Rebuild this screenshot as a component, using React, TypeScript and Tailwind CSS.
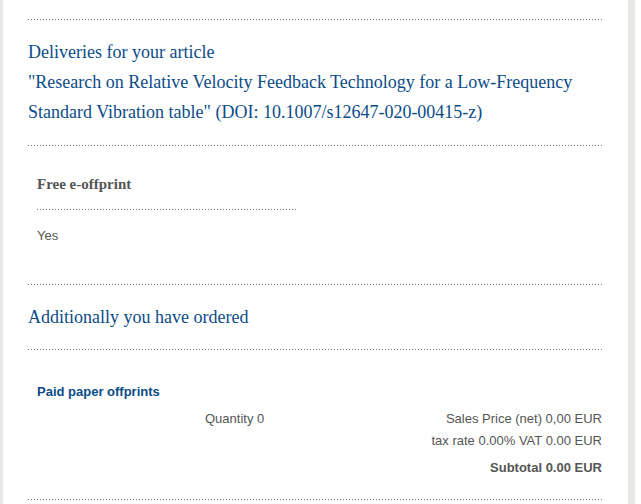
const serif = "font-['Liberation_Serif','Times_New_Roman',serif]";
const sans = "font-['Liberation_Sans',Arial,sans-serif]";

const Dotted = ({ className = "" }: { className?: string }) => (
  <div
    className={`h-px bg-[linear-gradient(to_right,#7a7a7a_1px,transparent_1px)] bg-[length:3px_1px] bg-repeat-x ${className}`}
  />
);

export default function App() {
  return (
    <div className="flex h-[504px] w-full overflow-hidden bg-white">
      <div className="w-[3px] shrink-0 bg-[#e7e7e3]" />
      <div className="flex-1 pl-[25px] pr-[26px] pt-[19px]">
        <Dotted />

        <div
          className={`${serif} mt-[17px] text-[18px] leading-[30px] text-[#0b4c88]`}
        >
          <div>Deliveries for your article</div>
          <div>
            "Research on Relative Velocity Feedback Technology for a
            Low-Frequency Standard Vibration table" (DOI:
            10.1007/s12647-020-00415-z)
          </div>
        </div>

        <Dotted className="mt-[18px]" />

        <div className="pl-[9px]">
          <div
            className={`${serif} mt-[28px] text-[15px] font-bold leading-[20px] text-[#555]`}
          >
            Free e-offprint
          </div>
          <Dotted className="mt-[15px] w-[260px]" />
          <div
            className={`${sans} mt-[16px] text-[13px] leading-[20px] text-[#555]`}
          >
            Yes
          </div>
        </div>

        <Dotted className="mt-[38px]" />

        <div
          className={`${serif} mt-[17px] text-[18px] leading-[30px] text-[#0b4c88]`}
        >
          Additionally you have ordered
        </div>

        <Dotted className="mt-[17px]" />

        <div className={`${sans} pl-[9px] text-[13px] leading-[20px]`}>
          <div className="mt-[32px] font-bold text-[#0b4c88]">
            Paid paper offprints
          </div>
          <div className="mt-[7px] flex items-start text-[#555]">
            <div className="w-[168px] shrink-0" />
            <div>Quantity 0</div>
            <div className="flex flex-1 flex-col items-end">
              <div>Sales Price (net) 0,00 EUR</div>
              <div className="mt-[2px]">tax rate 0.00% VAT 0.00 EUR</div>
              <div className="mt-[7px] font-bold">Subtotal 0.00 EUR</div>
            </div>
          </div>
        </div>

        <Dotted className="mt-[21px]" />
      </div>
      <div className="w-[7px] shrink-0 bg-[#e7e7e3]" />
      <div className="w-[6px] shrink-0 bg-white" />
    </div>
  );
}
